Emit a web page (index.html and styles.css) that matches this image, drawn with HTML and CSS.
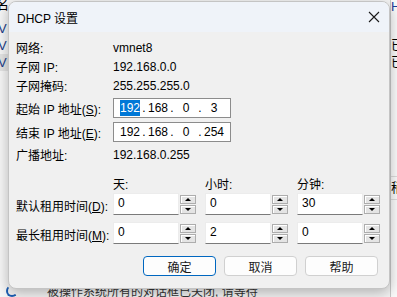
FILE: index.html
```html
<!DOCTYPE html>
<html lang="zh-CN">
<head>
    <meta charset="UTF-8">
    <title>DHCP 设置</title>
    <link rel="stylesheet" href="styles.css">
</head>
<body>
    <div class="desktop">
        <div class="back-left">
            <div class="back-line top">名</div>
            <div class="back-line blue">V</div>
            <div class="back-line blue">V</div>
            <div class="back-line blue sel">V</div>
        </div>
        <div class="back-right">
            <div class="back-line host">Ho</div>
            <div class="back-line">已师</div>
            <div class="back-line">已师</div>
            <div class="back-line later">稍</div>
        </div>
        <div class="back-bottom">
            <span class="busy"></span>
            <span class="back-status">被操作系统所有的对话框已关闭, 请等待</span>
        </div>

        <div class="dialog">
            <div class="titlebar">
                <span class="title">DHCP 设置</span>
                <svg class="close" width="12" height="12" viewBox="0 0 12 12">
                    <path d="M1 1 L11 11 M11 1 L1 11" stroke="#1a1a1a" stroke-width="1.1" fill="none"/>
                </svg>
            </div>

            <div class="content">
                <div class="row info">
                    <span class="label">网络:</span>
                    <span class="value">vmnet8</span>
                </div>
                <div class="row info">
                    <span class="label">子网 IP:</span>
                    <span class="value">192.168.0.0</span>
                </div>
                <div class="row info">
                    <span class="label">子网掩码:</span>
                    <span class="value">255.255.255.0</span>
                </div>

                <div class="row ip-row first">
                    <span class="label">起始 IP 地址(<u>S</u>):</span>
                    <div class="ip-box">
                        <span class="octet"><span class="selected">192</span></span><span class="dot">.</span>
                        <span class="octet">168</span><span class="dot">.</span>
                        <span class="octet">0</span><span class="dot">.</span>
                        <span class="octet">3</span>
                    </div>
                </div>
                <div class="row ip-row">
                    <span class="label">结束 IP 地址(<u>E</u>):</span>
                    <div class="ip-box">
                        <span class="octet">192</span><span class="dot">.</span>
                        <span class="octet">168</span><span class="dot">.</span>
                        <span class="octet">0</span><span class="dot">.</span>
                        <span class="octet">254</span>
                    </div>
                </div>
                <div class="row info broadcast">
                    <span class="label">广播地址:</span>
                    <span class="value">192.168.0.255</span>
                </div>

                <div class="lease lease-head">
                    <span></span>
                    <span class="col-head">天:</span>
                    <span class="col-head">小时:</span>
                    <span class="col-head">分钟:</span>
                </div>
                <div class="lease lease-row">
                    <span class="label">默认租用时间(<u>D</u>):</span>
                    <div class="spin"><span class="spin-edit">0</span><span class="spin-btns"><span class="spin-btn up"></span><span class="spin-btn down"></span></span></div>
                    <div class="spin"><span class="spin-edit">0</span><span class="spin-btns"><span class="spin-btn up"></span><span class="spin-btn down"></span></span></div>
                    <div class="spin"><span class="spin-edit">30</span><span class="spin-btns"><span class="spin-btn up"></span><span class="spin-btn down"></span></span></div>
                </div>
                <div class="lease lease-row">
                    <span class="label">最长租用时间(<u>M</u>):</span>
                    <div class="spin"><span class="spin-edit">0</span><span class="spin-btns"><span class="spin-btn up"></span><span class="spin-btn down"></span></span></div>
                    <div class="spin"><span class="spin-edit">2</span><span class="spin-btns"><span class="spin-btn up"></span><span class="spin-btn down"></span></span></div>
                    <div class="spin"><span class="spin-edit">0</span><span class="spin-btns"><span class="spin-btn up"></span><span class="spin-btn down"></span></span></div>
                </div>

                <div class="buttons">
                    <button class="btn primary">确定</button>
                    <button class="btn">取消</button>
                    <button class="btn">帮助</button>
                </div>
            </div>
        </div>
    </div>
</body>
</html>
```

FILE: styles.css
```css
* {
    box-sizing: border-box;
}
body {
    margin: 0;
    font-family: "Liberation Sans", "Noto Sans CJK SC", sans-serif;
    font-size: 12px;
    color: #000;
    background: #f3f3f3;
}
.desktop {
    position: relative;
    width: 397px;
    height: 297px;
    overflow: hidden;
    background: #f5f5f5;
}
.back-left {
    width: 8px;
    height: 297px;
    overflow: hidden;
    background: #f7f7f7;
}
.back-line {
    height: 17px;
    line-height: 17px;
    font-size: 13px;
    white-space: nowrap;
}
.back-line.top {
    height: 24px;
    margin-top: -4px;
    margin-left: -4px;
}
.back-line.blue {
    color: #1e3f8a;
    margin-left: -2px;
}
.back-line.sel {
    background: #e4e4e4;
}
.back-right {
    position: absolute;
    left: 390px;
    top: 0;
    width: 7px;
    height: 297px;
    overflow: hidden;
    border-left: 1px solid #c9c9c9;
    background: #fafafa;
}
.back-right .host {
    color: #1d3f9c;
    height: 36px;
    line-height: 14px;
}
.back-right .later {
    margin-top: 106px;
    border-top: 1px solid #dcdcdc;
    border-bottom: 1px solid #dcdcdc;
    height: 24px;
    line-height: 22px;
}
.back-bottom {
    position: absolute;
    left: 0;
    top: 284px;
    width: 397px;
    height: 13px;
    display: flex;
    align-items: center;
}
.busy {
    width: 12px;
    height: 12px;
    margin-left: 6px;
    border-radius: 50%;
    border: 2px solid transparent;
    border-left-color: #1c5fb5;
    border-bottom-color: #1c5fb5;
}
.back-status {
    margin-left: 29px;
    font-size: 12px;
    color: #333;
}

.dialog {
    position: absolute;
    left: 8px;
    top: 1px;
    width: 382px;
    height: 288px;
    background: #f0f0f0;
    border: 1px solid #c4c4c4;
    border-radius: 8px;
    box-shadow: 0 4px 14px rgba(0, 0, 0, 0.28);
    overflow: hidden;
}
.titlebar {
    height: 30px;
    background: #eff3f9;
    display: flex;
    align-items: center;
    justify-content: space-between;
    padding: 0 9px 0 8px;
}
.title {
    font-size: 12px;
}
.close {
    display: block;
}
.content {
    padding: 6px 8px 0 7px;
}
.row {
    display: grid;
    grid-template-columns: 97px 1fr;
    align-items: center;
}
.row.info {
    height: 19px;
}
.label {
    white-space: nowrap;
}
.label u {
    text-decoration-thickness: 1px;
    text-underline-offset: 1px;
}
.ip-row {
    height: 20px;
    margin-top: 3px;
}
.ip-row + .ip-row {
    margin-top: 4px;
}
.row.broadcast {
    margin-top: 3px;
}
.ip-box {
    width: 118px;
    height: 20px;
    background: #fff;
    border: 1px solid #8c8c8c;
    display: flex;
    align-items: center;
    padding-left: 6px;
}
.octet {
    width: 20px;
    text-align: center;
}
.dot {
    width: 8px;
    text-align: center;
}
.selected {
    background: #0078d7;
    color: #fff;
    padding: 1px 0;
}

.lease {
    display: grid;
    grid-template-columns: 89px 84px 84px 84px;
    column-gap: 8px;
    align-items: center;
}
.lease-head {
    margin-top: 9px;
    height: 20px;
}
.lease-row {
    height: 22px;
}
.lease-row + .lease-row {
    margin-top: 7px;
}
.lease .label {
    margin-top: 2px;
}
.spin {
    display: flex;
    height: 22px;
    align-items: center;
}
.spin-edit {
    width: 66px;
    height: 22px;
    background: #fff;
    border: 1px solid #ececec;
    border-bottom: 1px solid #7a7a7a;
    padding: 2px 0 0 4px;
}
.spin-btns {
    width: 17px;
    height: 19px;
    display: flex;
    flex-direction: column;
    justify-content: space-between;
    margin-left: 1px;
}
.spin-btn {
    height: 9px;
    width: 16px;
    background: #e4e4e4;
    border: 1px solid #adadad;
    box-shadow: inset 1px 1px 0 #fff;
    display: flex;
    align-items: center;
    justify-content: center;
}
.spin-btn::after {
    content: "";
    width: 0;
    height: 0;
    border-left: 3px solid transparent;
    border-right: 3px solid transparent;
}
.spin-btn.up::after {
    border-bottom: 3px solid #000;
}
.spin-btn.down::after {
    border-top: 3px solid #000;
}

.buttons {
    margin-top: 12px;
    margin-right: 3px;
    display: flex;
    justify-content: flex-end;
    gap: 8px;
}
.btn {
    width: 73px;
    height: 20px;
    font-family: "Liberation Sans", "Noto Sans CJK SC", sans-serif;
    font-size: 12px;
    background: #fdfdfd;
    border: 1px solid #d0d0d0;
    border-radius: 4px;
    padding: 0;
    color: #1a1a1a;
}
.btn.primary {
    border: 1px solid #0067c0;
}
```
